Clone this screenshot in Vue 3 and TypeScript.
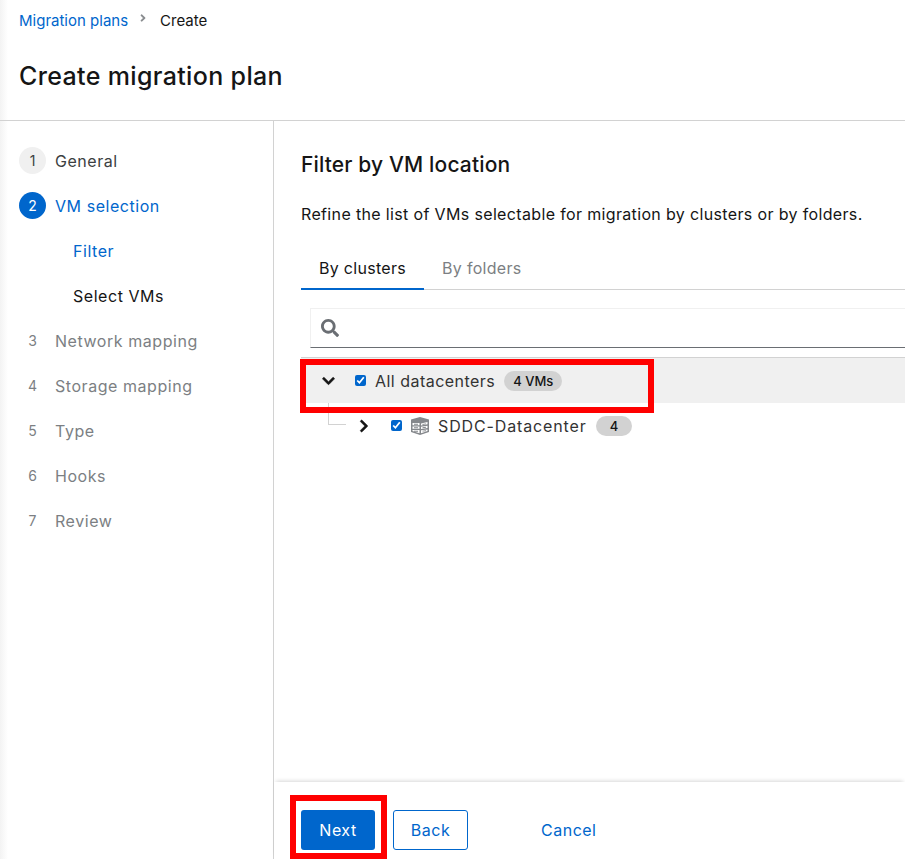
<script setup lang="ts">
import { ref } from 'vue'

interface WizardStep {
  num?: number
  label: string
  state: 'done' | 'current' | 'sub-current' | 'sub' | 'disabled'
}

const steps = ref<WizardStep[]>([
  { num: 1, label: 'General', state: 'done' },
  { num: 2, label: 'VM selection', state: 'current' },
  { label: 'Filter', state: 'sub-current' },
  { label: 'Select VMs', state: 'sub' },
  { num: 3, label: 'Network mapping', state: 'disabled' },
  { num: 4, label: 'Storage mapping', state: 'disabled' },
  { num: 5, label: 'Type', state: 'disabled' },
  { num: 6, label: 'Hooks', state: 'disabled' },
  { num: 7, label: 'Review', state: 'disabled' }
])

const allChecked = ref(true)
const dcChecked = ref(true)
</script>

<template>
  <div class="page">
    <header class="head">
      <nav class="crumbs">
        <a class="link">Migration plans</a>
        <svg class="crumb-sep" viewBox="0 0 256 512" width="8" height="12"><path fill="#8a8d90" d="M224.3 273l-136 136c-9.400 9.400-24.600 9.400-33.900 0l-22.600-22.600c-9.400-9.400-9.400-24.600 0-33.900l96.400-96.400-96.400-96.400c-9.400-9.400-9.400-24.600 0-33.900L54.300 103c9.400-9.400 24.600-9.400 33.900 0l136 136c9.500 9.400 9.500 24.600.1 34z"/></svg>
        <span>Create</span>
      </nav>
      <h1>Create migration plan</h1>
    </header>

    <div class="wizard">
      <aside class="side">
        <div v-for="s in steps" :key="s.label" class="step" :class="s.state">
          <span v-if="s.num" class="num">{{ s.num }}</span>
          <span class="step-label">{{ s.label }}</span>
        </div>
      </aside>

      <section class="main">
        <div class="body">
          <h2>Filter by VM location</h2>
          <p class="desc">Refine the list of VMs selectable for migration by clusters or by folders.</p>
          <div class="tabs">
            <div class="tab active">By clusters</div>
            <div class="tab">By folders</div>
          </div>
          <div class="search">
            <svg viewBox="0 0 512 512" width="18" height="18"><path fill="#6a6e73" d="M505 442.700L405.300 343c-4.500-4.500-10.600-7-17-7H372c27.600-35.300 44-79.700 44-128C416 93.100 322.900 0 208 0S0 93.100 0 208s93.100 208 208 208c48.300 0 92.700-16.400 128-44v16.300c0 6.400 2.500 12.500 7 17l99.700 99.700c9.400 9.400 24.600 9.400 33.900 0l28.300-28.300c9.400-9.400 9.400-24.600.1-34zM208 336c-70.700 0-128-57.200-128-128 0-70.700 57.200-128 128-128 70.700 0 128 57.200 128 128 0 70.700-57.200 128-128 128z"/></svg>
          </div>
          <div class="tree">
            <div class="row top">
              <svg class="toggle" viewBox="0 0 448 512" width="13" height="14"><path fill="#151515" stroke="#151515" stroke-width="20" d="M207 381.500L12.700 187.100c-9.400-9.400-9.400-24.600 0-33.900l22.700-22.700c9.400-9.400 24.500-9.400 33.900 0L224 284.500l154.700-154c9.400-9.300 24.500-9.300 33.900 0l22.700 22.700c9.400 9.400 9.400 24.600 0 33.900L241 381.500c-9.400 9.400-24.600 9.400-34 0z"/></svg>
              <input v-model="allChecked" class="check" type="checkbox" />
              <span class="name">All datacenters</span>
              <span class="badge">4 VMs</span>
            </div>
            <div class="row child">
              <span class="connector"></span>
              <svg class="toggle" viewBox="0 0 320 512" width="10" height="14"><path fill="#151515" stroke="#151515" stroke-width="20" d="M285.500 273L91.100 467.300c-9.400 9.400-24.600 9.400-33.900 0l-22.700-22.700c-9.400-9.400-9.400-24.500 0-33.900L188.500 256 34.500 101.300c-9.300-9.400-9.300-24.500 0-33.900l22.700-22.700c9.400-9.400 24.600-9.400 33.900 0L285.500 239c9.400 9.400 9.400 24.600 0 34z"/></svg>
              <input v-model="dcChecked" class="check" type="checkbox" />
              <svg class="dc-icon" viewBox="0 0 18 18" width="18" height="18">
                <path fill="#85888c" d="M0 2.500 9 0l9 2.500V15l-9 3-9-3z"/>
                <path fill="#fff" d="M1.500 6h7v2.300h-7zM1.500 9.500h7v2.300h-7zM1.500 13h7v3.300l-7-2.200zM10 6.500l6.500-1.500v2.300l-6.500 1.300zM10 9.800l6.500-1v2.300l-6.500 1zM10 13.200l6.500-.8v1.700l-6.500 2.200z"/>
                <path fill="#85888c" d="M3 6.700h4v1H3zM3 10.200h4v1H3zM3 13.700h4v1H3zM11.500 7l3.500-.6v.9l-3.500.6zM11.500 10.300l3.500-.5v.9l-3.500.5zM11.500 13.700l3.500-.4v.9l-3.500.4z"/>
              </svg>
              <span class="name caps">SDDC-Datacenter</span>
              <span class="badge wide">4</span>
            </div>
          </div>
        </div>
        <footer class="foot">
          <button class="btn primary">Next</button>
          <button class="btn secondary">Back</button>
          <button class="btn plain">Cancel</button>
        </footer>
      </section>
    </div>

    <div class="mark mark-row"></div>
    <div class="mark mark-next"></div>
  </div>
</template>

<style>
html, body {
  margin: 0;
  background: #fff;
}
</style>

<style scoped>
.page {
  position: relative;
  width: 905px;
  height: 859px;
  overflow: hidden;
  display: flex;
  flex-direction: column;
  background: linear-gradient(to right, #f3f3f3, #fff 8px);
  color: #151515;
  font-family: Inter, "Liberation Sans", sans-serif;
  font-size: 16px;
}
.head {
  height: 121px;
  flex: none;
  box-sizing: border-box;
  padding: 10px 19px 0;
  border-bottom: 1px solid #d2d2d2;
}
.crumbs {
  display: flex;
  align-items: center;
  height: 20px;
  font-size: 15px;
}
.link {
  color: #06c;
}
.crumb-sep {
  margin: 0 13px 0 11px;
  position: relative;
  top: -2px;
}
h1 {
  margin: 28px 0 0;
  font-size: 25px;
  font-weight: 500;
  line-height: 36px;
  letter-spacing: 0.35px;
}
.wizard {
  flex: 1;
  display: flex;
  min-height: 0;
}
.side {
  width: 274px;
  flex: none;
  box-sizing: border-box;
  border-right: 1px solid #d2d2d2;
  padding-top: 17px;
}
.step {
  height: 45px;
  display: flex;
  align-items: center;
  padding-left: 19px;
  color: #7c7f83;
  letter-spacing: 0.55px;
}
.num {
  width: 27px;
  height: 27px;
  border-radius: 50%;
  display: flex;
  align-items: center;
  justify-content: center;
  margin-right: 9px;
  font-size: 14px;
  letter-spacing: 0;
  flex: none;
}
.step.done .step-label,
.step.done .num {
  color: #3c3f42;
}
.step.done .num {
  background: #f0f0f0;
}
.step.current {
  color: #06c;
}
.step.current .num {
  background: #06c;
  color: #fff;
}
.step.sub-current,
.step.sub {
  padding-left: 73px;
}
.step.sub-current {
  color: #06c;
}
.step.sub {
  color: #151515;
}
.main {
  flex: 1;
  display: flex;
  flex-direction: column;
  min-width: 0;
  background: #fff;
}
.body {
  flex: 1;
  padding: 28px 0 0 27px;
}
h2 {
  margin: 0;
  font-size: 21px;
  font-weight: 500;
  line-height: 32px;
  letter-spacing: 0.15px;
}
.desc {
  margin: 21px 0 0;
  line-height: 24px;
  white-space: nowrap;
  letter-spacing: 0.35px;
}
.tabs {
  display: flex;
  margin-top: 21px;
  height: 43px;
  box-sizing: border-box;
  border-bottom: 1px solid #d2d2d2;
}
.tab {
  padding: 0 18px;
  height: 43px;
  box-sizing: border-box;
  line-height: 42px;
  color: #7c7f83;
  letter-spacing: 0.3px;
}
.tab.active {
  color: #151515;
  border-bottom: 2px solid #06c;
}
.search {
  margin: 18px 0 0 9px;
  height: 40px;
  box-sizing: border-box;
  border: 1px solid #f0f0f0;
  border-right: none;
  border-bottom: 1px solid #6a6e73;
  display: flex;
  align-items: center;
  padding-left: 10px;
}
.tree {
  margin-top: 9px;
  border-top: 1px solid #d2d2d2;
}
.row {
  position: relative;
  height: 45px;
  display: flex;
  align-items: center;
}
.row.top {
  background: #f0f0f0;
  padding-left: 21px;
}
.row.child {
  padding-left: 58px;
}
.connector {
  position: absolute;
  left: 27px;
  top: 0;
  width: 18px;
  height: 22px;
  box-sizing: border-box;
  border-left: 1px solid #d2d2d2;
  border-bottom: 1px solid #d2d2d2;
}
.check {
  width: 11px;
  height: 11px;
  margin: 0;
  accent-color: #06c;
  flex: none;
}
.row.top .check {
  margin-left: 20px;
}
.row.child .check {
  margin-left: 22px;
}
.dc-icon {
  margin-left: 9px;
}
.name {
  margin-left: 9px;
  white-space: nowrap;
  color: #333;
  letter-spacing: 0.47px;
}
.name.caps {
  letter-spacing: 0.87px;
}
.badge {
  margin-left: 9px;
  height: 20px;
  line-height: 20px;
  padding: 0 9px;
  border-radius: 10px;
  background: #d2d2d2;
  font-size: 13px;
  font-weight: 500;
}
.badge.wide {
  padding: 0 14px;
}
.foot {
  height: 77px;
  flex: none;
  box-sizing: border-box;
  display: flex;
  align-items: flex-start;
  padding: 28px 0 0 27px;
  box-shadow: 0 -3px 4px -2px rgba(3, 3, 3, 0.16);
}
.btn {
  height: 40px;
  box-sizing: border-box;
  border-radius: 3px;
  border: none;
  background: none;
  font: inherit;
  padding: 0;
  color: #06c;
  letter-spacing: 0.5px;
}
.btn.primary {
  width: 74px;
  background: #06c;
  color: #fff;
}
.btn.secondary {
  width: 75px;
  margin-left: 18px;
  border: 1px solid #06c;
}
.btn.plain {
  margin-left: 73px;
}
.mark {
  position: absolute;
  box-sizing: border-box;
  border: 6px solid #f00;
  pointer-events: none;
}
.mark-row {
  left: 300px;
  top: 359px;
  width: 354px;
  height: 54px;
}
.mark-next {
  left: 290px;
  top: 795px;
  width: 97px;
  height: 64px;
}
</style>
